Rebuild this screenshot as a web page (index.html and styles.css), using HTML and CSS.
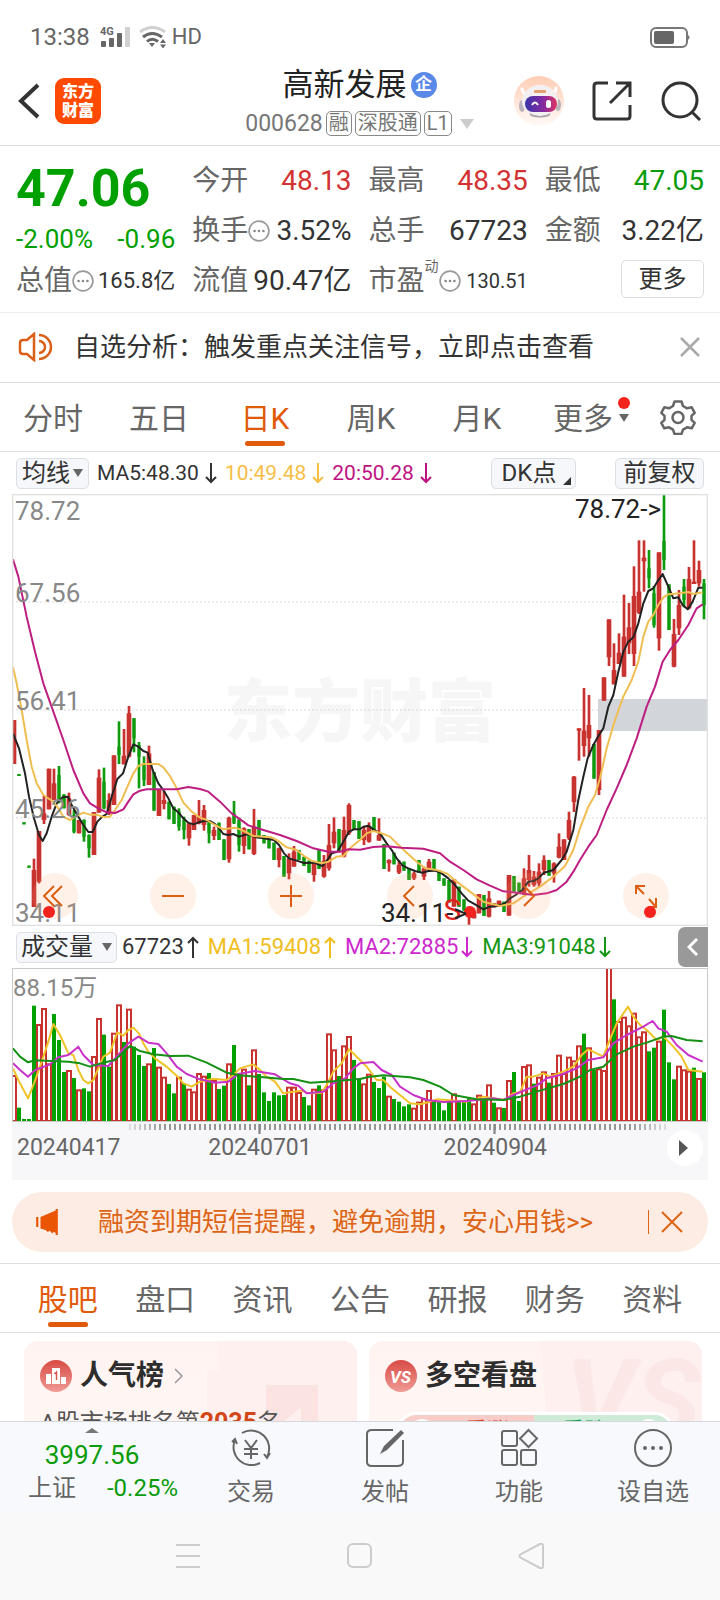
FILE: index.html
```html
<!DOCTYPE html>
<html lang="zh-CN">
<head>
<meta charset="utf-8">
<meta name="viewport" content="width=device-width, initial-scale=1">
<title>高新发展 000628</title>
<link rel="stylesheet" href="styles.css">
</head>
<body>
<div class="screen">
  <div class="status">
    <span class="status-time">13:38</span>
    <svg class="status-signal" viewBox="0 0 30 22" width="30" height="22"><g fill="#666"><rect x="1" y="15" width="5" height="6" rx="1"/><rect x="9" y="12" width="5" height="9" rx="1"/><rect x="17" y="7" width="5" height="14" rx="1"/><rect x="25" y="1" width="5" height="20" rx="1" fill="#d0d0d0"/></g><text x="0" y="9" class="signal-text">4G</text></svg>
    <svg viewBox="0 0 30 22" width="30" height="22" fill="none" stroke-width="3"><path d="M2 6Q14-3 27 6" stroke="#d0d0d0"/><path d="M5 11Q14 4 24 11M9 15.500Q14 11 20 15.500" stroke="#666"/><path d="M11 17h6l-3 4zM22 17l3-4 3 4zM22 18.500h6l-3 4z" fill="#666"/></svg>
    <span class="status-hd">HD</span>
    <svg class="battery" viewBox="0 0 40 21" width="40" height="21"><rect x="1" y="1" width="36" height="19" rx="5" fill="none" stroke="#777" stroke-width="2"/><rect x="4" y="4" width="20" height="13" rx="2" fill="#666"/><path d="M38 8q3 2 0 5z" fill="#777"/></svg>
  </div>

  <header class="header">
    <div class="header-side">
      <button class="plain" aria-label="返回"><svg viewBox="0 0 24 36" width="24" height="36" fill="none" stroke="#333" stroke-width="4"><path d="M21 2 4 18 21 34"/></svg></button>
      <div class="logo"><span>东方</span><span>财富</span></div>
    </div>
    <div class="header-mid">
      <h1 class="title">高新发展<span class="title-badge">企</span></h1>
      <div class="code">000628<span class="tag">融</span><span class="tag">深股通</span><span class="tag">L1</span><i class="code-caret"></i></div>
    </div>
    <div class="header-side header-actions">
      <button class="plain" aria-label="智能助手"><svg viewBox="0 0 50 50" width="50" height="50"><defs><linearGradient id="halo" x2="0" y2="1"><stop stop-color="#ffcdb5"/><stop offset="1" stop-color="#fffaf7"/></linearGradient><linearGradient id="visor"><stop stop-color="#3a35a8"/><stop offset=".6" stop-color="#8a2aa0"/><stop offset="1" stop-color="#e0335f"/></linearGradient></defs><circle cx="25" cy="25" r="25" fill="url(#halo)"/><path d="M8 13q1 5 5 5M42 12q0 6-6 6" stroke="#fff" stroke-width="3" fill="none" stroke-linecap="round"/><ellipse cx="8" cy="30" rx="3" ry="6" fill="#b9b3bb"/><ellipse cx="44" cy="29" rx="3" ry="6" fill="#b9b3bb"/><ellipse cx="26" cy="25" rx="18" ry="16" fill="#f4f0f1"/><path d="M15 37q11 6 22 0l-2 3q-9 3-18 0z" fill="#aaa0aa"/><rect x="20" y="14" width="12" height="3" rx="1" fill="#e0a070"/><rect x="11" y="20" width="32" height="16" rx="8" fill="url(#visor)"/><path d="M18 29q3-5 6 0" stroke="#fff" stroke-width="2" fill="none"/><rect x="32" y="24" width="5" height="8" rx="2.500" fill="#fff"/></svg></button>
      <button class="plain" aria-label="分享"><svg viewBox="0 0 40 40" width="40" height="40" fill="none" stroke="#333" stroke-width="3"><path d="M16 2H5Q2 2 2 5V35Q2 38 5 38H35Q38 38 38 35V24M24 2H38V16M38 2 18 22"/></svg></button>
      <button class="plain" aria-label="搜索"><svg viewBox="0 0 42 40" width="42" height="40" fill="none" stroke="#333" stroke-width="3"><circle cx="20" cy="19" r="17"/><path d="M32 31l8 8"/></svg></button>
    </div>
  </header>

  <section class="quote">
    <div class="quote-main">
      <strong class="price">47.06</strong>
      <div class="change"><span>-2.00%</span><span>-0.96</span></div>
    </div>
    <div class="cell"><span class="label">今开</span><span class="value up">48.13</span></div>
    <div class="cell"><span class="label">最高</span><span class="value up">48.35</span></div>
    <div class="cell"><span class="label">最低</span><span class="value down">47.05</span></div>
    <div class="cell"><span class="label">换手</span><svg class="info" viewBox="0 0 20 20"><use href="#dots"/></svg><span class="value">3.52%</span></div>
    <div class="cell"><span class="label">总手</span><span class="value">67723</span></div>
    <div class="cell"><span class="label">金额</span><span class="value">3.22亿</span></div>
    <div class="cell"><span class="label">总值</span><svg class="info" viewBox="0 0 20 20"><g id="dots"><circle cx="10" cy="10" r="9" fill="none" stroke="#999" stroke-width="1.500"/><g fill="#888"><circle cx="6" cy="10" r="1.200"/><circle cx="10" cy="10" r="1.200"/><circle cx="14" cy="10" r="1.200"/></g></g></svg><span class="value value-mid">165.8亿</span></div>
    <div class="cell"><span class="label">流值</span><span class="value">90.47亿</span></div>
    <div class="cell"><span class="label">市盈</span><sup class="sup">动</sup><svg class="info" viewBox="0 0 20 20"><use href="#dots"/></svg><span class="value value-small">130.51</span></div>
    <div class="cell cell-end"><button class="more">更多</button></div>
  </section>

  <section class="notice">
    <svg viewBox="0 0 36 30" width="36" height="30" fill="none" stroke="#dc5f19" stroke-width="2.500"><path d="M16 2V28L9 22H5Q2 22 2 19V11Q2 8 5 8H9ZM21 9a6 6 0 0 1 0 12M21 3a12 12 0 0 1 0 24"/></svg>
    <a class="notice-text" href="#">自选分析：触发重点关注信号，立即点击查看</a>
    <button class="plain" aria-label="关闭提示"><svg viewBox="0 0 20 20" width="20" height="20" stroke="#aaa" stroke-width="2.500"><path d="M1 1 19 19M19 1 1 19"/></svg></button>
  </section>

  <nav class="period" aria-label="周期">
    <button class="tab">分时</button>
    <button class="tab">五日</button>
    <button class="tab tab-on">日K</button>
    <button class="tab">周K</button>
    <button class="tab">月K</button>
    <button class="tab"><span class="tab-more">更多<i class="dot"></i><i class="tab-caret"></i></span></button>
    <button class="plain gear" aria-label="设置"><svg viewBox="0 0 36 36" width="36" height="36" fill="none" stroke="#666" stroke-width="2.500" stroke-linejoin="round"><path d="M14.500 2.500h7l1.500 4.500 4 2.300 4.700-1 3 5.500-3.200 3v4l3.200 3-3 5.500-4.700-1-4 2.300-1.500 4.400h-7L13 30.600l-4-2.300-4.700 1-3-5.500 3.200-3v-4l-3.200-3 3-5.500 4.700 1 4-2.300z"/><circle cx="18" cy="18.500" r="5.500"/></svg></button>
  </nav>

  <main class="content">
    <div class="bar">
      <button class="chip">均线<i class="chip-caret"></i></button>
      <span class="ma">MA5:48.30<svg class="arrow" viewBox="0 0 12 22"><path d="M6 1V20M1 15l5 5 5-5"/></svg></span>
      <span class="ma ma-10">10:49.48<svg class="arrow" viewBox="0 0 12 22"><path d="M6 1V20M1 15l5 5 5-5"/></svg></span>
      <span class="ma ma-20">20:50.28<svg class="arrow" viewBox="0 0 12 22"><path d="M6 1V20M1 15l5 5 5-5"/></svg></span>
      <button class="chip chip-dk">DK点<i class="corner"></i></button>
      <button class="chip chip-adj">前复权</button>
    </div>

    <div class="chart">
      <div class="watermark">东方财富</div>
      <svg class="plot" id="price" viewBox="36 12 2088 1296" role="img" aria-label="日K线"></svg>
      <span class="scale scale-1">78.72</span>
      <span class="scale scale-2">67.56</span>
      <span class="scale scale-3">56.41</span>
      <span class="scale scale-4">45.26</span>
      <span class="scale scale-5">34.11</span>
      <div class="tools">
        <button class="tool" aria-label="最左"><svg viewBox="0 0 46 46"><path d="M22 13 12 23 22 33M30 13 20 23 30 33"/></svg></button>
        <button class="tool" aria-label="缩小"><svg viewBox="0 0 46 46"><path d="M12 23H34"/></svg></button>
        <button class="tool" aria-label="放大"><svg viewBox="0 0 46 46"><path d="M12 23H34M23 12V34"/></svg></button>
        <button class="tool" aria-label="左移"><svg viewBox="0 0 46 46"><path d="M27 13 17 23 27 33"/></svg></button>
        <button class="tool" aria-label="右移"><svg viewBox="0 0 46 46"><path d="M19 13 29 23 19 33"/></svg></button>
        <button class="tool" aria-label="全屏"><svg viewBox="0 0 46 46"><path d="M13 21V13H22M13 13l8 8M25 34H33V25M33 34l-7-8"/></svg></button>
      </div>
      <i class="dot mark-1"></i><i class="dot mark-2"></i><i class="dot mark-3"></i>
      <span class="peak peak-high">78.72-&gt;</span>
      <span class="sell">S</span>
      <span class="peak peak-low">34.11-&gt;</span>
    </div>

    <div class="bar bar-volume">
      <button class="chip chip-volume">成交量<i class="chip-caret"></i></button>
      <span class="ma">67723<svg class="arrow" viewBox="0 0 12 22"><path d="M6 22V2M1 7l5-5 5 5"/></svg></span>
      <span class="ma vol-1">MA1:59408<svg class="arrow" viewBox="0 0 12 22"><path d="M6 22V2M1 7l5-5 5 5"/></svg></span>
      <span class="ma vol-2">MA2:72885<svg class="arrow" viewBox="0 0 12 22"><path d="M6 1V20M1 15l5 5 5-5"/></svg></span>
      <span class="ma vol-3">MA3:91048<svg class="arrow" viewBox="0 0 12 22"><path d="M6 1V20M1 15l5 5 5-5"/></svg></span>
      <button class="fold" aria-label="展开"><svg viewBox="0 0 12 20" width="12" height="20" fill="none" stroke="#fff" stroke-width="3"><path d="M10 2 2 10 10 18"/></svg></button>
    </div>

    <div class="chart">
      <svg class="plot" id="volume" viewBox="36 144 2088 462" role="img" aria-label="成交量"></svg>
      <span class="volume-max">88.15万</span>
    </div>
    <div class="axis">
      <svg class="plot" id="ticks" viewBox="36 606 2088 36" aria-hidden="true"></svg>
      <span class="date date-1">20240417</span>
      <span class="date date-2">20240701</span>
      <span class="date date-3">20240904</span>
      <button class="play" aria-label="播放"><svg viewBox="0 0 9 16" width="9" height="16"><path d="M0 0 9 8 0 16z" fill="#555"/></svg></button>
    </div>

    <div class="banner">
      <svg viewBox="0 0 30 36" width="30" height="36" fill="#ea5504"><path d="M0 11h3v14H0zM6 11 27 2V0h3V36h-3v-3l-3-1-2 2-3-4-3 2-3-3-7-2z"/></svg>
      <a class="banner-text" href="#">融资到期短信提醒，避免逾期，安心用钱&gt;&gt;</a>
      <i class="banner-line"></i>
      <button class="plain" aria-label="关闭横幅"><svg viewBox="0 0 22 22" width="22" height="22" stroke="#dc6414" stroke-width="2"><path d="M1 1 21 21M21 1 1 21"/></svg></button>
    </div>

    <nav class="sections" aria-label="栏目">
      <button class="tab tab-on">股吧</button>
      <button class="tab">盘口</button>
      <button class="tab">资讯</button>
      <button class="tab">公告</button>
      <button class="tab">研报</button>
      <button class="tab">财务</button>
      <button class="tab">资料</button>
    </nav>

    <div class="cards">
      <article class="card">
        <svg class="card-art" viewBox="0 0 333 100" preserveAspectRatio="xMaxYMin slice"><path d="M163 100V72h20V30h12V0H333V100z" fill="#fdf0ef"/><path d="M198 100V84h44V44h52V100z" fill="#fbe3e2"/><path d="M275 68 260 80V100H277V68z" fill="#fdf0ef"/></svg>
        <h2 class="card-title"><svg viewBox="0 0 32 32" width="32" height="32"><circle cx="16" cy="16" r="16" fill="url(#badge)"/><path d="M6 14h5v10H6zM12 8h8v16H12zM21 17h5v7H21z" fill="#fff"/><path d="M14.500 14 16.500 12V20" stroke="#d9534f" stroke-width="1.500" fill="none"/></svg>人气榜<svg class="card-next" viewBox="0 0 10 16" width="10" height="16" fill="none" stroke="#999" stroke-width="1.500"><path d="M1 1 8 8 1 15"/></svg></h2>
        <p class="rank">A股市场排名第<b>2035</b>名</p>
      </article>
      <article class="card">
        <svg class="card-art" viewBox="0 0 333 100" preserveAspectRatio="xMaxYMin slice"><path d="M171 0H333V100H180z" fill="#fdf0ef"/><text x="196" y="96" class="art-vs">VS</text></svg>
        <h2 class="card-title"><svg viewBox="0 0 32 32" width="32" height="32"><defs><linearGradient id="badge" x2="0" y2="1"><stop stop-color="#d84a45"/><stop offset="1" stop-color="#f09a94"/></linearGradient></defs><circle cx="16" cy="16" r="16" fill="url(#badge)"/><text x="5" y="23" class="vs">VS</text></svg>多空看盘</h2>
        <div class="vote"><button class="vote-up"><i class="face"></i>看涨</button><button class="vote-down">看跌<i class="face"></i></button></div>
      </article>
    </div>
  </main>

  <footer class="dock">
    <button class="index">
      <i class="index-caret"></i>
      <span class="index-value">3997.56</span>
      <span class="index-row"><span>上证</span><span class="down">-0.25%</span></span>
    </button>
    <button class="dock-item"><svg viewBox="0 0 44 40"><path d="M13 5A18 18 0 0 1 38 29M41 25 38 30 35 26M31 35A18 18 0 0 1 6 12M3 14 6 11 8 16M16 12l6 8 6-8M22 20V31M15 21H29M15 26H29"/></svg>交易</button>
    <button class="dock-item"><svg viewBox="0 0 44 40"><path d="M30 2H9Q4 2 4 6V34Q4 38 9 38H34Q40 38 40 34V12"/><path d="M38 2 41 5 24 22 17 26 21 18z" fill="#666" stroke="none"/></svg>发帖</button>
    <button class="dock-item"><svg viewBox="0 0 44 40"><rect x="5" y="3" width="15" height="15" rx="2"/><rect x="5" y="22" width="15" height="15" rx="2"/><rect x="24" y="22" width="15" height="15" rx="2"/><path d="M31.500 2 40 10.500 31.500 19 23 10.500z"/></svg>功能</button>
    <button class="dock-item"><svg viewBox="0 0 44 40"><circle cx="22" cy="20" r="18"/><g fill="#666" stroke="none"><circle cx="14" cy="20" r="2"/><circle cx="22" cy="20" r="2"/><circle cx="30" cy="20" r="2"/></g></svg>设自选</button>
  </footer>
  <div class="system">
    <button class="plain" aria-label="任务"><svg viewBox="0 0 26 26" width="26" height="26"><path d="M1 2H25M1 13H25M1 24H25"/></svg></button>
    <button class="plain" aria-label="主页"><svg viewBox="0 0 26 26" width="26" height="26"><rect x="1" y="1" width="23" height="23" rx="5"/></svg></button>
    <button class="plain" aria-label="后退"><svg viewBox="0 0 26 26" width="26" height="26"><path d="M22 1Q25 0 25 3V23Q25 26 22 25L3 15Q0 13 3 11z"/></svg></button>
  </div>
</div>
<script src="chart.js"></script>
</body>
</html>
```

FILE: styles.css
```css
* { box-sizing: border-box; }
body {
  margin: 0;
  background: #fff;
  color: #333;
  font-family: Roboto, "Noto Sans CJK SC", sans-serif;
}
button {
  margin: 0;
  padding: 0;
  border: 0;
  background: none;
  color: inherit;
  font: inherit;
}
a { color: inherit; text-decoration: none; }
svg { display: block; flex: none; }
h1, h2, p { margin: 0; }
i { font-style: normal; }
.plain { display: flex; align-items: center; justify-content: center; }
.screen { display: flex; flex-direction: column; height: 100vh; overflow: hidden; }

.status { display: flex; align-items: center; gap: 8px; flex: none; height: 62px; padding: 12px 30px 0; color: #666; }
.status-time { font-size: 24px; line-height: 28px; }
.status-signal { margin-left: 2px; }
.signal-text { font: bold 11px Roboto, sans-serif; fill: #666; }
.status-hd { margin-left: -4px; font-size: 22px; line-height: 28px; }
.battery { margin-left: auto; }

.header { display: flex; align-items: center; justify-content: space-between; flex: none; height: 84px; padding: 0 18px 0 17px; border-bottom: 1px solid #ddd; }
.header-side { display: flex; align-items: center; flex: 1; gap: 14px; margin-top: -6px; }
.header-actions { justify-content: flex-end; gap: 28px; }
.logo { display: flex; flex-direction: column; align-items: center; justify-content: center; width: 46px; height: 46px; border-radius: 9px; background: #ff4a00; color: #fff; font-size: 16px; font-weight: 900; line-height: 19px; }
.header-mid { display: flex; flex-direction: column; align-items: center; }
.title { display: flex; align-items: center; gap: 4px; color: #222; font-size: 31px; font-weight: 400; line-height: 40px; }
.title-badge { width: 26px; height: 26px; border-radius: 50%; background: #5a8ae8; color: #fff; font-size: 17px; font-weight: 700; line-height: 25px; text-align: center; }
.code { display: flex; align-items: center; gap: 3px; color: #777; font-size: 23px; line-height: 38px; }
.tag { padding: 0 2px; border: 1px solid #888; border-radius: 5px; font-size: 20px; line-height: 23px; }
.code-caret { margin-left: 5px; border: 7px solid transparent; border-top: 10px solid #ccc; border-bottom: 0; }

.quote { display: grid; grid-template-columns: repeat(4, 1fr); grid-auto-rows: 50px; column-gap: 17px; flex: none; padding: 10px 16px 6px; border-bottom: 1px solid #eee; }
.quote-main { grid-row: span 2; color: #00a000; }
.price { display: block; font-size: 52px; font-weight: 700; line-height: 66px; }
.change { display: flex; justify-content: space-between; font-size: 26px; line-height: 34px; }
.cell { display: flex; align-items: center; white-space: nowrap; }
.cell-end { justify-content: flex-end; align-items: flex-start; padding-top: 4px; }
.label { color: #666; font-size: 28px; line-height: 40px; }
.info { width: 22px; height: 22px; }
.sup { align-self: flex-start; color: #666; font-size: 14px; line-height: 20px; }
.value { margin-left: auto; font-size: 28px; line-height: 40px; }
.value-mid { font-size: 22px; }
.value-small { font-size: 20px; }
.up { color: #d23232; }
.down { color: #0a9b0a; }
.more { width: 83px; height: 38px; border: 1px solid #ddd; border-radius: 5px; font-size: 24px; line-height: 34px; }

.notice { display: flex; align-items: center; flex: none; height: 70px; padding: 0 20px 2px 18px; border-bottom: 1px solid #ddd; }
.notice-text { flex: 1; padding-left: 20px; font-size: 26px; line-height: 38px; }

.period, .sections { display: flex; flex: none; border-bottom: 1px solid #ddd; color: #666; }
.tab { position: relative; flex: 1; padding-top: 4px; font-size: 30px; line-height: 64px; text-align: center; }
.tab-on { color: #e15a0a; }
.tab-on::after { content: ""; position: absolute; bottom: 5px; left: 50%; width: 40px; height: 5px; margin-left: -20px; border-radius: 3px; background: #e15a0a; }
.tab-more { position: relative; }
.dot { position: absolute; width: 12px; height: 12px; border-radius: 50%; background: #f5231e; }
.tab-more .dot { top: -4px; right: -17px; }
.tab-caret { position: absolute; top: 13px; right: -16px; border: 5px solid transparent; border-top: 8px solid #666; border-bottom: 0; }
.gear { width: 84px; }

.content { flex: 1; min-height: 0; overflow: hidden; }
.bar { display: flex; align-items: center; height: 42px; padding: 0 16px; white-space: nowrap; }
.bar-volume { padding-right: 12px; }
.chip { position: relative; display: flex; align-items: center; justify-content: center; gap: 3px; height: 31px; padding: 0 5px; border: 1px solid #dcdfe6; border-radius: 5px; background: #f6f7fa; font-size: 24px; line-height: 30px; }
.chip-caret { border: 5px solid transparent; border-top: 8px solid #666; border-bottom: 0; }
.chip-volume { gap: 9px; padding: 0 4px; }
.chip-dk { width: 85px; margin-left: auto; padding-right: 14px; }
.corner { position: absolute; right: 4px; bottom: 3px; border: 4px solid #333; border-top-color: transparent; border-left-color: transparent; }
.chip-adj { width: 89px; margin-left: 39px; }
.ma { display: flex; align-items: center; gap: 6px; margin-left: 8px; font-size: 21px; line-height: 30px; }
.bar-volume .ma { gap: 3px; margin-left: 9px; font-size: 22px; }
.bar-volume .chip + .ma { margin-left: 5px; }
.arrow { width: 12px; height: 22px; fill: none; stroke: currentColor; stroke-width: 2; }
.ma-10 { color: #f5be46; }
.ma-20 { color: #be1482; }
.vol-1 { color: #f0be1e; }
.vol-2 { color: #cd28cd; }
.vol-3 { color: #149614; }
.fold { display: flex; align-items: center; justify-content: center; width: 30px; height: 40px; margin-left: auto; border-radius: 7px 0 0 7px; background: #999; }

.chart, .axis { position: relative; margin: 0 12px; }
.plot { position: relative; width: 100%; height: auto; }
.watermark { position: absolute; top: 40%; width: 100%; color: #f6f6f6; font-size: 68px; font-weight: 900; line-height: 92px; text-align: center; }
.scale, .peak, .sell, .volume-max, .date { position: absolute; line-height: 30px; }
.scale { left: 3px; color: #888; font-size: 26px; }
.scale-1 { top: 2px; }
.scale-2 { top: 19.500%; }
.scale-3 { top: 44.500%; }
.scale-4 { top: 69.500%; }
.scale-5 { bottom: -2px; }
.peak { color: #222; font-size: 26px; }
.peak-high { top: 0; right: 47px; }
.peak-low { bottom: -2px; left: 53%; }
.sell { bottom: 1px; left: 62%; color: #d22; font-size: 30px; }
.tools { position: absolute; right: 39px; bottom: 7px; left: 20px; display: flex; justify-content: space-between; }
.tool { width: 46px; height: 46px; border-radius: 50%; background: rgba(255, 160, 110, .16); }
.tool svg { fill: none; stroke: #dc5f14; stroke-width: 2; }
.mark-1 { bottom: 8px; left: 31px; }
.mark-2 { bottom: 8px; left: 65%; }
.mark-3 { right: 52px; bottom: 8px; }
.volume-max { top: 5px; left: 1px; color: #888; font-size: 24px; }
.axis { height: 58px; background: #f7f7fa; color: #666; font-size: 23px; }
.date { top: 11px; }
.date-1 { left: 5px; }
.date-2 { left: 28.200%; }
.date-3 { left: 62%; }
.play { position: absolute; top: 8px; right: 5px; display: flex; align-items: center; justify-content: center; width: 36px; height: 36px; padding-right: 4px; border-radius: 50%; background: #fff; }

.banner { display: flex; align-items: center; height: 60px; margin: 12px 12px 11px; padding: 0 25px 0 20px; border-radius: 30px; background: #fdece3; color: #dc6414; }
.banner svg { height: 26px; }
.banner .plain svg { height: 22px; }
.banner-text { flex: 1; padding-left: 36px; font-size: 26px; line-height: 40px; }
.banner-line { width: 1px; height: 24px; margin-right: 12px; background: #dc6414; }
.sections { padding: 0 19px; border-top: 1px solid #ddd; }
.cards { display: grid; grid-template-columns: 1fr 1fr; gap: 12px; padding: 8px 18px 8px 24px; }
.card { position: relative; height: 160px; overflow: hidden; padding: 15px 16px; border-radius: 14px; background: linear-gradient(#fff3f0, #fffaf8); }
.card-art { position: absolute; top: 0; right: 0; width: 100%; height: 100px; }
.art-vs { font: italic bold 110px Roboto, sans-serif; fill: #fbe7e6; }
.card-title { position: relative; display: flex; align-items: center; gap: 8px; color: #2d2d2d; font-size: 28px; font-weight: 700; line-height: 40px; }
.card-next { margin-left: 2px; }
.vs { font: italic bold 17px Roboto, sans-serif; fill: #fff; }
.rank { position: relative; padding-top: 8px; color: #555; font-size: 24px; line-height: 38px; }
.rank b { color: #d24619; font-size: 25px; }
.vote { position: relative; display: flex; margin: 16px 12px 0; border: 3px solid #fff; border-radius: 30px; overflow: hidden; font-size: 22px; line-height: 32px; }
.vote-up, .vote-down { display: flex; flex: 1; align-items: center; justify-content: space-between; }
.vote-up { padding: 0 25px 0 10px; background: #f9cdc7; color: #dc3c28; }
.vote-down { padding: 0 10px 0 28px; background: #cdebd7; color: #14a050; }
.face { width: 24px; height: 24px; border-radius: 50%; background: #fff; }

.dock { display: flex; flex: none; height: 90px; border-top: 1px solid #d5d9de; background: #f7f9fc; color: #666; font-size: 24px; }
.index { display: flex; flex-direction: column; align-items: center; width: 184px; padding: 6px 6px 0 28px; }
.index-caret { margin-right: 22px; border: 7px solid transparent; border-top: 0; border-bottom: 5px solid #777; }
.index-value { margin-right: 22px; padding-top: 6px; color: #0a9b0a; font-size: 26px; line-height: 32px; }
.index-row { display: flex; justify-content: space-between; width: 100%; line-height: 34px; }
.dock-item { display: flex; flex: 1; flex-direction: column; align-items: center; padding-top: 6px; line-height: 48px; }
.dock-item svg { width: 44px; height: 40px; fill: none; stroke: #666; stroke-width: 2; }
.system { display: flex; align-items: center; justify-content: space-between; flex: none; height: 89px; padding: 0 176px 0 175px; background: #f9f9f9; }
.system svg { fill: none; stroke: #ccc; stroke-width: 2; }
```

FILE: chart.js
```js
const STEP = 15;
const FIRST = 42;
const RED = "#c8322f";
const GREEN = "#0f9b0f";

/* side, high, low, body top, body bottom */
const candles = `r690,822 g852,858 g997,1003 g1127,1133 r1106,1251,1140,1251 r1023,1180,1023,1175 r918,1002,970,990 r836,958 r836,930,880,930 g828,940,855,935
g913,955 r908,978,925,975 g960,1030,975,1025 r990,1030 g988,1055,990,1040 g1033,1103,1035,1075 r966,1095 r838,968,863,968 g833,958,875,955 r910,975,930,970
r796,945 g694,822,770,795 r717,823,797,823 r648,802,670,800 g684,787,685,745 g756,895,765,800 g799,888,820,870 r767,885,790,885 g846,962 r898,978
r903,958,930,942 g935,988 g950,1002 g955,1022,965,1010 g980,1048,990,1020 r1000,1067,1000,1045 r975,1020 r930,1003,980,1000 r945,1022,960,1005 g990,1060,995,1030
r1010,1050,1020,1038 g998,1050 g1048,1110 r980,1118,983,1108 g933,1002,970,1000 g983,1085,990,1065 r1012,1092,1015,1068 g1017,1078 r957,1095,1010,1092 g990,1045
g1035,1060 g1045,1075 g1058,1110 r1073,1132,1075,1110 g1098,1160 r1090,1168,1105,1150 r1068,1130,1085,1130 g1080,1110 g1100,1128 g1112,1148
r1113,1175,1118,1155 g1080,1137 r1095,1163,1112,1160 r1002,1142,1065,1135 r982,1075,1025,1060 g1017,1085 r980,1102,1020,1100 r940,1035,945,1030 g990,1020 g993,1047
r1010,1065,1020,1050 r997,1058,1010,1055 g981,1025 r985,1052,1035,1052 g1062,1137 r1108,1145,1110,1120 g1088,1123 r1110,1152,1125,1148 g1115,1142 g1135,1170
r1145,1170,1150,1165 g1110,1148 r1130,1170,1135,1160 r1107,1145,1115,1140 g1107,1140 g1140,1173 g1165,1187 g1170,1238 r1168,1250 g1190,1250
g1228,1262 r1250,1308,1250,1280 r1265,1285 r1212,1270 g1215,1278 r1203,1282,1225,1280 r1240,1252 r1232,1250 g1235,1266 r1155,1277
g1158,1205 g1178,1205 r1135,1215,1165,1210 r1095,1190,1140,1170 r1143,1190,1160,1185 r1120,1190,1145,1180 r1096,1155,1110,1140 g1110,1157 r1117,1178,1120,1150 r1030,1105,1070,1103
r1048,1110 r965,1050,990,1045 r858,966,860,936 r715,812,715,722 r594,800,722,768 r615,800,705,745 g762,866 r720,915,720,900 r562,632 r388,528,388,502
r460,583,540,583 r430,522,488,522 r314,560,440,560 r339,492,412,460 r229,528,318,492 r151,372,305,368 r151,305,203,214 g180,295,235,265 g288,413,310,405 r187,482,187,445
g12,240,153,210 g283,420 r387,532,432,530 r300,435,345,415 g267,352,290,330 r231,358,267,355 r151,282,275,282 r212,290,240,280 g267,388,280,345`.split(/\s+/);

/* side and bar top */
const volumes = `r465 g563 g597 g597 g257 r312 r264 r430 g282 g360 g456 r450 g474 r508 g505 g514 r408 r294 g344 g440
r338 r253 g366 r266 g380 g405 g438 r430 g384 r440 r470 g492 g520 r470 g490 r506 r514 r459 r467 g459
r480 g507 g497 r430 g375 g460 r446 g496 r388 g462 g517 g543 g517 g526 g525 r500 r500 r516 g531 g556
r506 g496 r508 r340 r388 g468 r376 r348 g420 g475 r490 r461 g486 g504 g470 r527 g537 g545 g559 g553
r563 r545 r535 r510 g541 g546 g571 g546 r520 g545 g545 g535 r550 r524 g540 r493 g548 r562 g564 r480
g456 g543 r438 r433 g491 r470 r454 g488 r459 r404 r459 r410 r421 r376 g341 r382 g450 r445 r450 r135
g238 r303 r290 r316 r278 r349 r334 g394 g383 r362 g269 g427 g478 r437 r448 r452 g443 r474 g457`.split(/\s+/);

const line = (points, color) =>
  `<polyline points="${points}" fill="none" stroke="${color}" stroke-width="6" stroke-linejoin="round"/>`;
const rect = (x, y, w, h, attrs) =>
  `<rect x="${x}" y="${y}" width="${w}" height="${h}" ${attrs}/>`;

let price = rect(1794, 627, 327, 96, 'fill="#d2d5da"');
for (const y of [336, 660, 984]) {
  price += `<path d="M36 ${y}H2124" stroke="#d8d8d8" stroke-width="3" stroke-dasharray="6 6"/>`;
}
candles.forEach((item, i) => {
  const [high, low, top = high, bottom = low] = item.slice(1).split(",").map(Number);
  const red = item[0] === "r";
  const fill = `fill="${red ? RED : GREEN}"`;
  const x = FIRST + STEP * i;
  const half = red ? 7 : 5;
  price += rect(x - 4, high, 8, low - high, fill) + rect(x - half, top, half * 2, bottom - top, fill);
});
price += line("39,730 57,775 75,850 87,920 102,985 117,1035 128,1053 140,1030 155,980 170,940 187,922 204,920 215,945 235,980 250,1005 265,1026 278,1026 292,995 307,980 320,972 335,920 352,867 369,850 385,800 400,763 415,770 430,783 443,788 458,840 475,880 490,900 505,925 520,955 535,967 550,985 565,998 580,1003 597,997 612,993 630,993 642,1000 655,1012 670,1032 685,1035 700,1032 717,1040 732,1035 747,1033 762,1040 790,1045 822,1050 837,1065 852,1090 867,1105 890,1112 912,1119 942,1118 967,1128 982,1110 995,1090 1012,1085 1030,1055 1047,1025 1062,1018 1080,1018 1090,1010 1105,1007 1120,1018 1140,1030 1160,1060 1175,1080 1190,1105 1208,1127 1225,1135 1245,1143 1267,1148 1285,1143 1305,1142 1325,1150 1345,1165 1365,1185 1385,1210 1405,1232 1425,1243 1450,1258 1470,1250 1490,1248 1515,1240 1530,1225 1547,1215 1567,1200 1585,1175 1600,1173 1615,1165 1632,1148 1660,1140 1685,1110 1700,1085 1720,1020 1735,930 1750,860 1763,805 1780,765 1797,735 1810,715 1825,650 1840,615 1855,545 1870,485 1885,455 1900,442 1915,400 1930,340 1945,303 1960,295 1972,275 1988,252 2005,290 2020,325 2035,322 2048,345 2063,358 2078,335 2095,293 2108,293", "#222");
price += line("39,532 50,580 65,660 80,750 95,830 110,880 130,915 160,935 175,955 190,980 210,990 235,975 250,968 270,974 290,974 310,981 330,980 345,960 365,930 380,895 400,850 415,828 430,822 475,822 490,832 510,858 530,895 550,938 575,965 600,983 620,990 645,1005 670,1018 705,1013 725,1020 760,1038 790,1040 815,1042 835,1053 860,1072 890,1080 915,1100 935,1112 965,1120 985,1115 1010,1100 1030,1098 1055,1070 1080,1050 1100,1030 1120,1023 1145,1030 1170,1040 1190,1060 1220,1088 1250,1115 1275,1135 1310,1140 1340,1150 1370,1175 1410,1205 1450,1235 1500,1248 1540,1240 1570,1220 1620,1190 1660,1160 1695,1128 1720,1080 1740,1015 1765,950 1785,915 1800,865 1820,775 1845,690 1870,620 1895,570 1915,515 1930,440 1945,395 1960,375 1975,345 1990,322 2005,313 2040,310 2065,306 2080,312 2108,307", "#f0be50");
price += line("39,208 55,260 80,380 105,485 130,580 160,665 190,750 220,840 250,910 270,940 295,955 320,967 345,969 370,958 385,935 400,913 420,902 440,898 530,898 565,891 600,897 625,905 660,935 695,970 730,995 745,1006 790,1020 840,1035 890,1053 940,1075 985,1085 1020,1085 1045,1078 1080,1079 1120,1071 1160,1069 1205,1073 1270,1076 1320,1090 1350,1115 1390,1140 1430,1168 1470,1187 1510,1204 1550,1208 1600,1215 1640,1210 1670,1200 1700,1175 1720,1145 1740,1110 1765,1070 1790,1035 1820,960 1850,895 1880,825 1910,745 1940,650 1965,590 1988,515 2010,480 2035,450 2065,405 2090,355 2108,343", "#be1e82");
price += rect(38, 14, 2084, 1292, 'fill="none" stroke="#e0e0e0" stroke-width="4"');
document.getElementById("price").innerHTML = price;

let volume = "";
volumes.forEach((item, i) => {
  const top = Number(item.slice(1));
  const x = FIRST + STEP * i;
  volume += item[0] === "r"
    ? rect(x - 6, top + 3, 12, 600 - top, `fill="#fff" fill-opacity=".85" stroke="${RED}" stroke-width="6"`)
    : rect(x - 6, top, 12, 604 - top, 'fill="#00a000"');
});
volume += line("39,445 60,490 84,535 102,490 120,440 130,410 145,365 160,312 180,345 205,400 220,405 235,450 250,480 265,490 280,480 295,445 310,410 330,398 352,337 370,347 385,330 400,323 417,340 430,370 445,395 465,415 500,440 530,467 550,490 575,500 600,485 640,476 680,480 700,465 720,445 760,433 780,450 800,470 825,485 850,520 880,515 905,512 925,520 965,518 980,495 1000,455 1025,430 1047,388 1080,420 1100,440 1130,480 1150,480 1175,505 1200,525 1230,550 1260,553 1290,545 1310,538 1340,540 1400,545 1450,530 1515,540 1540,520 1560,517 1580,470 1600,470 1630,460 1650,470 1690,455 1720,440 1745,405 1765,388 1790,400 1810,410 1825,370 1850,310 1884,260 1900,290 1920,315 1940,330 1970,360 1990,350 2020,380 2045,410 2065,450 2108,455", "#f0c328");
volume += line("39,430 60,450 84,470 105,450 150,433 175,412 205,405 235,380 250,405 280,435 325,438 350,410 385,370 415,350 445,368 475,372 500,400 530,440 560,462 600,478 645,488 685,485 715,462 765,453 825,463 870,490 895,497 920,520 970,515 1000,490 1035,475 1060,445 1080,430 1120,426 1145,450 1175,465 1200,500 1240,525 1280,540 1330,546 1400,543 1480,535 1510,540 1540,525 1580,508 1610,497 1640,475 1680,465 1730,445 1765,420 1810,412 1840,370 1880,345 1930,320 1958,303 1975,325 2000,335 2030,375 2065,405 2108,425", "#c832c8");
volume += line("39,385 60,410 84,427 105,421 205,425 240,430 270,440 310,428 345,420 390,378 420,393 460,403 510,408 565,407 620,428 680,458 720,466 790,472 850,477 880,477 930,488 1000,484 1080,477 1110,470 1150,466 1230,472 1270,480 1320,500 1360,525 1430,538 1510,540 1560,530 1620,512 1690,492 1740,470 1770,450 1810,440 1850,403 1900,380 1940,368 1990,350 2015,348 2060,360 2108,364", "#149114");
volume += rect(37.5, 145.5, 2085, 459, 'fill="none" stroke="#c8c8c8" stroke-width="3"');
document.getElementById("volume").innerHTML = volume;

let ticks = "";
for (let x = 388; x <= 1994; x += STEP) {
  const edge = Math.min(x - 388, 1994 - x);
  const shade = Math.min(1, 0.25 + edge / 130);
  ticks += rect(x, 612, 4, 18, `fill="#666" fill-opacity="${shade.toFixed(2)}"`);
}
ticks += rect(775, 612, 7, 30, 'fill="#888"') + rect(1480, 612, 7, 30, 'fill="#888"');
document.getElementById("ticks").innerHTML = ticks;
```
